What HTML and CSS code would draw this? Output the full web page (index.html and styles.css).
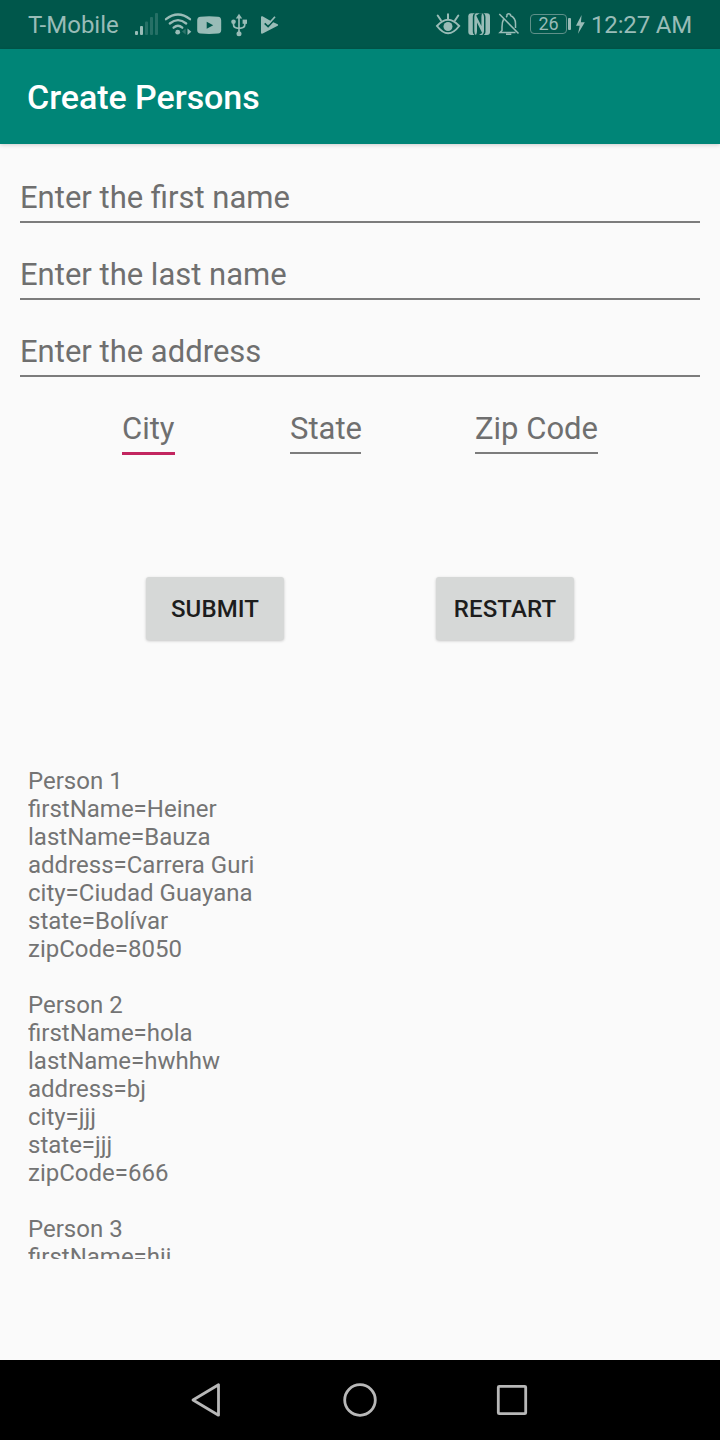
FILE: index.html
```html
<!DOCTYPE html>
<html lang="en">
<head>
<meta charset="utf-8">
<title>Create Persons</title>
<link rel="stylesheet" href="styles.css">
</head>
<body>
<div class="screen">
  <header class="status">
    <span class="carrier">T-Mobile</span>
    <svg class="signal" width="30" height="49" viewBox="132 0 30 49"><g fill="currentColor"><rect x="135" y="31" width="3" height="4" rx="1"/><rect x="140" y="26" width="3" height="9" rx="1"/><g opacity=".25"><rect x="145" y="21.500" width="3" height="13.500" rx="1"/><rect x="150" y="17" width="3" height="18" rx="1"/><rect x="155" y="13" width="3" height="22" rx="1"/></g></g></svg>
    <svg width="32" height="49" viewBox="162 0 32 49"><g fill="none" stroke="currentColor" stroke-width="2.300" stroke-linecap="round"><path d="M166 19.200Q178 9.800 190 19.200M169.800 23.500Q178 16.700 186.200 23.500M173.600 27.700Q178 23.900 182.300 27.700"/></g><circle cx="177.700" cy="32.200" r="2.400" fill="currentColor"/><path d="M185.700 28.500v6l-3.700-3z" fill="currentColor" opacity=".3"/><path d="M187.500 28.500v6.500l3.800-3.200z" fill="currentColor"/></svg>
    <svg width="32" height="49" viewBox="194 0 32 49"><path fill="currentColor" fill-rule="evenodd" d="M200.500 16.700Q209 16 218 16.700Q221.200 17 221.200 20.500V30Q221.200 33.300 218 33.600Q209 34.400 200.500 33.600Q197.200 33.300 197.200 30V20.500Q197.200 17 200.500 16.700zM206.700 21.700v7.100l6.500-3.600z"/></svg>
    <svg width="30" height="49" viewBox="226 0 30 49"><g fill="none" stroke="currentColor" stroke-width="1.700"><path d="M239 16V34M233.500 21V24.500Q233.500 28.300 239 28.300Q244.800 28.300 244.800 24.500V21"/></g><g fill="currentColor"><path d="M235.800 18.500L239 13.800l3.200 4.700z"/><circle cx="233.500" cy="21.700" r="2.300"/><rect x="242.600" y="19.600" width="4.400" height="4.200"/><circle cx="239" cy="33.700" r="2.500"/></g></svg>
    <svg width="30" height="49" viewBox="256 0 30 49"><path fill="currentColor" d="M261 17.200Q261 15.700 262.500 16.300L269 20L272.800 22L277.700 24.200Q278.700 25 277.700 25.700L262.700 33.600Q261 34.200 261 32.500z"/><path d="M264.700 23.300l3.400 3.300 6.300-7" fill="none" stroke="#00574b" stroke-width="1.700"/><path d="M268.500 24l6.500-7.300" fill="none" stroke="currentColor" stroke-width="1.700"/></svg>
    <svg class="eye" width="32" height="49" viewBox="432 0 32 49"><g fill="none" stroke="currentColor" stroke-width="2"><path d="M437 26Q448 13.500 459.200 26Q448 40.500 437 26z"/><path stroke-linecap="round" d="M437.700 15.500l3.200 4.800M448 14.200v4.700M458.300 15.500l-3.200 4.800"/></g><circle cx="448" cy="26.500" r="4.500" fill="currentColor"/></svg>
    <svg width="30" height="49" viewBox="464 0 30 49"><rect x="468.300" y="13.200" width="21.700" height="21.800" rx="3" fill="currentColor"/><g fill="#00574b"><path d="M476 13.200h-1.500Q472.800 14 472.800 16.500V32Q472.800 34 474.500 35h1.500Q474.300 34 474.300 31V17Q474.300 14 476 13.200z"/><path d="M482.300 13.200h1.500Q485.500 14.500 485.500 17V32Q485.500 34 483.800 35h-1.500Q484 33.800 484 31V17Q484 14.500 482.300 13.200z"/><path d="M477 22.500L482.200 33Q480.500 34 479 35H476Q477 33.500 477 31z"/><path d="M481.400 26L476.200 15.500Q478 14.500 479.500 13.200H482.400Q481.400 14.500 481.400 17z"/></g></svg>
    <svg width="33" height="49" viewBox="494 0 33 49"><g fill="none" stroke="currentColor" stroke-width="1.500"><path d="M499.300 14l19.200 19.500M503.500 19.500Q502 22 502 27V30.500L500 32.500H515.500M506 17.200Q507 16.700 507 15.500V14.500Q508.700 13 510.500 14.500V15.500Q515.500 17.800 515.500 23.500V28M506 34.200H511.300"/></g></svg>
    <span class="battery">26</span><span class="terminal"></span>
    <svg width="16" height="49" viewBox="572 0 16 49"><path fill="currentColor" d="M581.600 15L576 25.800h3.700L578 33.800 584.800 22.300h-3.900z"/></svg>
    <time class="clock">12:27 AM</time>
  </header>
  <div class="appbar"><h1 class="title">Create Persons</h1></div>
  <main class="content">
    <div class="field">Enter the first name</div>
    <div class="field">Enter the last name</div>
    <div class="field">Enter the address</div>
    <div class="places">
      <div class="field city">City</div>
      <div class="field state">State</div>
      <div class="field zip">Zip Code</div>
    </div>
    <div class="actions">
      <button class="button">SUBMIT</button>
      <button class="button">RESTART</button>
    </div>
    <div class="people">Person 1
firstName=Heiner
lastName=Bauza
address=Carrera Guri
city=Ciudad Guayana
state=Bolívar
zipCode=8050

Person 2
firstName=hola
lastName=hwhhw
address=bj
city=jjj
state=jjj
zipCode=666

Person 3
firstName=hjj</div>
  </main>
  <nav class="navbar">
    <svg width="720" height="80" viewBox="0 0 720 80"><g fill="none" stroke="#b8b8b8" stroke-width="2.800" stroke-linejoin="round"><path d="M193 40L218.500 24.800V55.200z"/><circle cx="360" cy="40" r="15.300"/><rect x="498.300" y="26.300" width="27.400" height="27.400" rx="1"/></g></svg>
  </nav>
</div>
</body>
</html>
```
FILE: styles.css
```css
* { box-sizing: border-box; }
body { margin: 0; font-family: Roboto, "Liberation Sans", sans-serif; background: #fafafa; }
.screen { width: 720px; height: 1440px; display: flex; flex-direction: column; overflow: hidden; }
.status { height: 49px; flex: none; display: flex; align-items: center; padding-left: 28px; background: #00574b; color: #99bcb7; white-space: nowrap; }
.status svg { flex: none; display: block; }
.carrier { width: 104px; padding-top: 2px; font-size: 24px; line-height: 47px; }
.eye { margin-left: 146px; }
.battery { width: 37px; height: 20px; margin: 0 1px 1px 3px; border: 1.500px solid #5f9089; border-radius: 4px; font-size: 18px; line-height: 18px; text-align: center; }
.terminal { width: 3px; height: 12px; margin: 0 1px 1px 0; border-radius: 1px; background: #99bcb7; }
.clock { margin-left: 3px; padding-top: 2px; font-size: 24px; line-height: 47px; letter-spacing: -.15px; }
.appbar { position: relative; height: 95px; flex: none; display: flex; align-items: center; padding-left: 27px; background: #008577; box-shadow: 0 1px 4px rgba(0,0,0,.18); }
.title { margin: 0; color: #fff; font-size: 34px; font-weight: 500; line-height: 40px; letter-spacing: -.05px; }
.content { flex: 1; display: flex; flex-direction: column; padding: 33px 20px 0; color: #6f6f6f; }
.field { height: 46px; margin-bottom: 31px; border-bottom: 2px solid #7c7c7c; font-size: 31px; line-height: 41px; white-space: nowrap; }
.places { display: flex; padding-left: 102px; }
.city { width: 53px; height: 47px; margin-bottom: 30px; border-bottom: 3px solid #c2255f; }
.state { width: 71px; margin-left: 115px; }
.zip { width: 123px; margin-left: 114px; }
.actions { display: flex; gap: 152px; padding-left: 126px; margin-top: 92px; }
.button { width: 138px; height: 63px; padding: 2px 0 0; border: 0; border-radius: 3px; background: #d6d8d7; color: #1d1d1d; font: 500 24px/61px Roboto, sans-serif; letter-spacing: .1px; box-shadow: 0 1px 3px rgba(0,0,0,.22); }
.people { height: 492px; margin: 127px 8px 0; overflow: hidden; font-size: 24px; line-height: 28px; white-space: pre-line; color: #747474; }
.navbar { height: 80px; flex: none; background: #000; }
```
